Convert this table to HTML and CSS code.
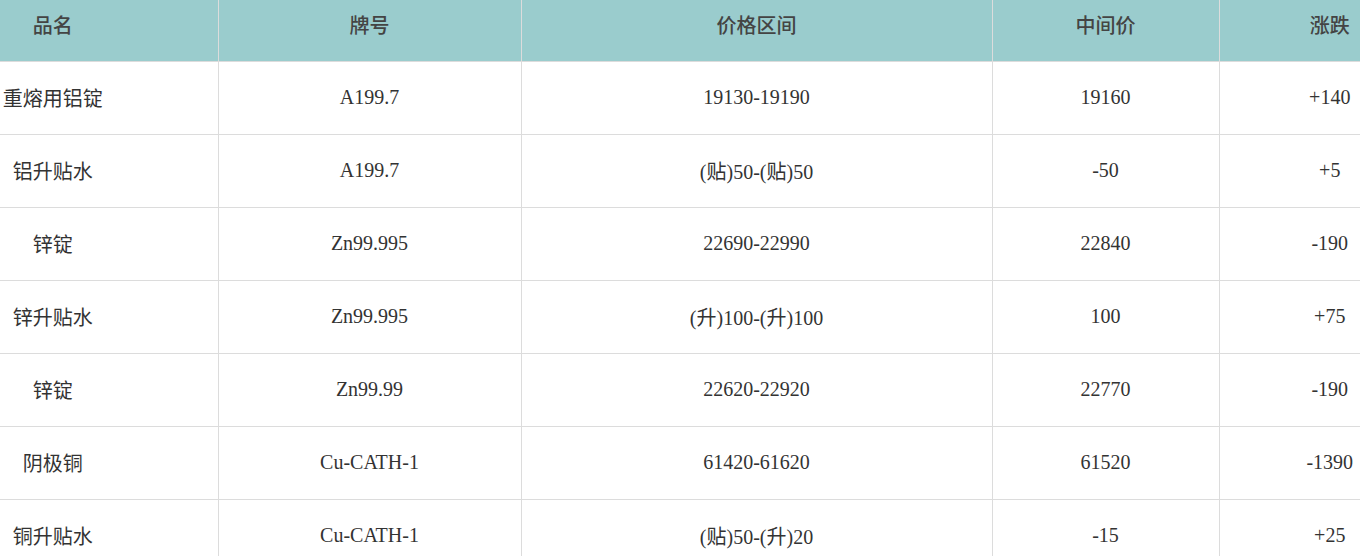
FILE: index.html
```html
<!DOCTYPE html>
<html lang="zh-CN">
<head>
<meta charset="utf-8">
<title>价格表</title>
<link rel="stylesheet" href="styles.css">
</head>
<body>
<div class="wrap">
  <table class="price-table">
    <colgroup>
      <col class="c1"><col class="c2"><col class="c3"><col class="c4"><col class="c5">
    </colgroup>
    <thead>
      <tr><th>品名</th><th>牌号</th><th>价格区间</th><th>中间价</th><th>涨跌</th></tr>
    </thead>
    <tbody>
      <tr><td>重熔用铝锭</td><td>A199.7</td><td>19130-19190</td><td>19160</td><td>+140</td></tr>
      <tr><td>铝升贴水</td><td>A199.7</td><td>(贴)50-(贴)50</td><td>-50</td><td>+5</td></tr>
      <tr><td>锌锭</td><td>Zn99.995</td><td>22690-22990</td><td>22840</td><td>-190</td></tr>
      <tr><td>锌升贴水</td><td>Zn99.995</td><td>(升)100-(升)100</td><td>100</td><td>+75</td></tr>
      <tr><td>锌锭</td><td>Zn99.99</td><td>22620-22920</td><td>22770</td><td>-190</td></tr>
      <tr><td>阴极铜</td><td>Cu-CATH-1</td><td>61420-61620</td><td>61520</td><td>-1390</td></tr>
      <tr><td>铜升贴水</td><td>Cu-CATH-1</td><td>(贴)50-(升)20</td><td>-15</td><td>+25</td></tr>
    </tbody>
  </table>
</div>
</body>
</html>
```
FILE: styles.css
```css
html, body {
  margin: 0;
  padding: 0;
  background: #ffffff;
}
.wrap {
  width: 1360px;
  height: 556px;
  overflow: hidden;
}
.price-table {
  border-collapse: collapse;
  table-layout: fixed;
  width: 1552px;
  margin-left: -112px;
  font-family: "Liberation Serif", "Noto Sans CJK SC", serif;
  font-size: 20px;
  color: #333333;
}
.c1 { width: 330px; }
.c2 { width: 303px; }
.c3 { width: 471px; }
.c4 { width: 227px; }
.c5 { width: 221px; }
.price-table th {
  height: 61px;
  padding: 0 0 11px 0;
  box-sizing: border-box;
  background: #9acccd;
  color: #444444;
  font-weight: 500;
  text-align: center;
  border-left: 1px solid #dcdcdc;
  border-bottom: 1px solid #dcdcdc;
}
.price-table td {
  height: 72px;
  padding: 0;
  text-align: center;
  vertical-align: middle;
  border-left: 1px solid #dcdcdc;
  border-bottom: 1px solid #dcdcdc;
  white-space: nowrap;
}
.price-table th:first-child,
.price-table td:first-child {
  border-left: none;
}
```
